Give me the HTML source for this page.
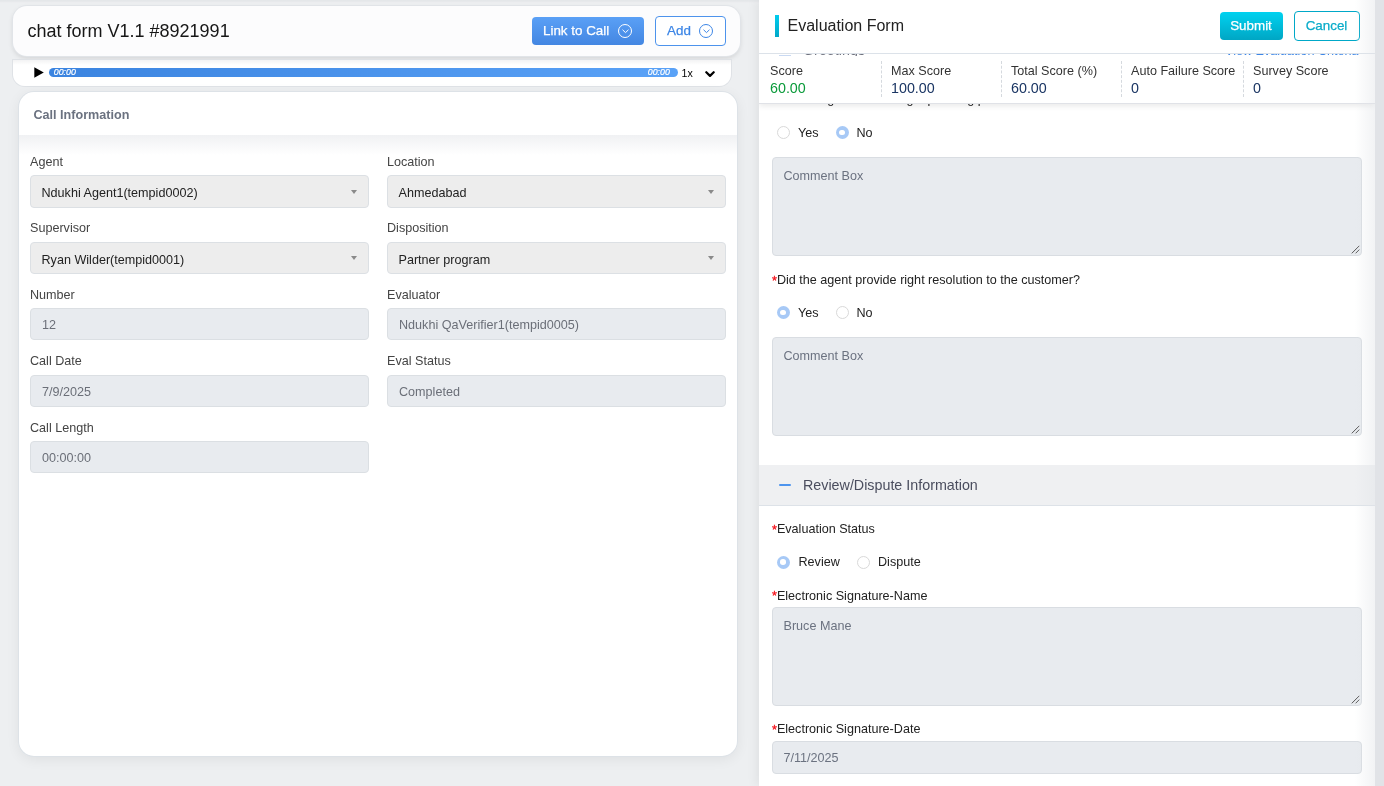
<!DOCTYPE html>
<html><head><meta charset="utf-8">
<style>
*{box-sizing:border-box;margin:0;padding:0}
html,body{width:1384px;height:786px;overflow:hidden}
body{position:relative;background:#edeff1;font-family:"Liberation Sans",sans-serif;color:#333}
.abs{position:absolute}
/* left */
#hdr{left:13px;top:5.5px;width:727px;height:50.5px;background:#fcfcfd;border-radius:14px;box-shadow:0 0 0 1px #e1e4e8,0 2px 5px rgba(0,0,0,.13)}
#hdr .t{left:14.5px;top:13px;font-size:18px;color:#161616;white-space:nowrap;line-height:24px}
.btn1,.btn2,.sbtn,.cbtn{-webkit-text-stroke:0.25px currentColor}
.btn1{left:519px;top:11.5px;width:112px;height:28px;border-radius:4px;background:linear-gradient(#5aa0f6,#4386e2);color:#fff;font-size:13.4px;line-height:27.2px;padding-left:11px;white-space:nowrap}
.btn2{left:642px;top:10.5px;width:71px;height:30px;border-radius:4px;border:1px solid #4d93ec;color:#3d86e6;font-size:13.4px;line-height:27.2px;padding-left:11px;white-space:nowrap;background:#fff}
.circ{position:absolute;width:14px;height:14px;border-radius:50%;border:1px solid currentColor}
#audio{left:13px;top:59.5px;width:718px;height:26px;background:linear-gradient(#f3f3f4,#fafafa 3px,#fff 5px);border-radius:0 0 12px 12px;box-shadow:0 0 0 1px #dfe2e6,0 -1px 0 0 #d3d7dc}
.prog{left:35.8px;top:8.5px;width:629px;height:9px;border-radius:5px;background:linear-gradient(90deg,#3b84e0,#5aa2f7)}
.prog span{position:absolute;top:-1.2px;font-size:8.8px;font-style:italic;color:#fff;line-height:10px;-webkit-text-stroke:0.2px #fff}
.pt1{left:5px}.pt2{right:8px}
.spd{left:668.5px;top:7.2px;font-size:10.6px;color:#000;line-height:13px}
#card{left:19px;top:91.5px;width:718px;height:664.5px;background:#fff;border-radius:15px;box-shadow:0 0 0 1px #dde2e7,0 3px 14px rgba(0,0,0,.07)}
#card .ch{left:0;top:0;width:718px;height:43.5px;border-bottom:0;}
#card .cht{left:14.5px;top:15px;font-size:12.6px;font-weight:bold;color:#6b7280;line-height:16px}
#card .shade{left:0;top:43.5px;width:718px;height:20px;background:linear-gradient(#f0f1f3,#fff)}
.lbl{position:absolute;font-size:12.6px;color:#444;line-height:15px;white-space:nowrap}
.sel{position:absolute;width:339px;height:32.5px;background:#ededed;border:1px solid #dce0e4;border-radius:4px;font-size:12.6px;color:#222;line-height:34px;padding-left:10.5px;white-space:nowrap}
.sel:after{content:"";position:absolute;right:11px;top:13.5px;border-left:3px solid transparent;border-right:3px solid transparent;border-top:4px solid #8a8a8a}
.inp{position:absolute;width:339px;height:32px;background:#e8ebef;border:1px solid #dbdfe3;border-radius:4px;font-size:12.6px;color:#6b6f78;line-height:32px;padding-left:11px;white-space:nowrap}
/* right */
#rp{left:759px;top:0;width:616px;height:786px;background:#fff;overflow:hidden}
#rpsh{left:759px;top:0;width:616px;height:786px;box-shadow:-3px 0 10px rgba(0,0,0,.06)}
.q{font-size:12.6px;color:#222;line-height:15px;white-space:nowrap}
.req{color:#f5161e;font-size:12.6px;position:relative;top:0.5px;margin-right:0px;-webkit-text-stroke:0.35px #f5161e}
.rad{width:13px;height:13px;border-radius:50%;border:1px solid #d9d9d9;background:#fff}
.rad.on{border:none;background:#a7c9f6}
.rad.on:after{content:"";position:absolute;left:3.75px;top:3.75px;width:5.5px;height:5.5px;border-radius:50%;background:#fff}
.rl{font-size:12.6px;color:#222;line-height:15px;margin-top:1px;white-space:nowrap}
.ta{width:589.5px;background:#e8ebef;border:1px solid #d9dde2;border-radius:4px;font-size:12.6px;color:#6b7280;line-height:15px;padding:10.5px 0 0 10.5px;white-space:nowrap}
.grip{position:absolute;right:1px;bottom:1px;width:9px;height:9px}
.sec{width:616px;height:41px;background:#eff0f2;border-bottom:1px solid #dde2e8}
.minus{position:absolute;left:19.5px;top:19px;width:12.5px;height:2px;border-radius:1px;background:#4d94ee}
.st{position:absolute;left:44px;top:12px;font-size:14.3px;color:#4a4d5e;line-height:17px;white-space:nowrap}
.rhead{left:0;top:0;width:616px;height:54px;background:#fff;border-bottom:1px solid #dde3ea}
.acc{left:16px;top:15px;width:4px;height:22px;background:linear-gradient(#00cdef,#00a8c8)}
.rtitle{left:28.5px;top:16px;font-size:16px;color:#222;line-height:19px;white-space:nowrap}
.sbtn{left:460.5px;top:12px;width:63px;height:28px;border-radius:4px;background:linear-gradient(#00d2f0,#00a6c4);color:#fff;font-size:13.4px;line-height:28px;text-align:center}
.cbtn{left:535px;top:11px;width:66px;height:30px;border-radius:4px;border:1px solid #00a8c8;color:#0aacca;font-size:13.4px;line-height:28px;text-align:center;padding-right:1px;background:#fff}
.scb{left:0;top:56px;width:616px;height:48px;background:#fff;border-bottom:1px solid #e0e2e7;box-shadow:0 2px 6px rgba(0,0,0,.09)}
.sc{top:6.5px}
.sl{font-size:12.6px;color:#333;line-height:16px;white-space:nowrap}
.sv{font-size:14.3px;color:#1a3563;margin-top:0.5px;line-height:18px;white-space:nowrap}
.dv{top:5px;width:0;height:36px;border-left:1px dashed #d5d9de}
.peek{left:0;top:54px;width:616px;height:1.6px;overflow:hidden;background:#fff}
.rshade{left:596px;top:0;width:20px;height:786px;background:linear-gradient(90deg,rgba(225,228,232,0),rgba(225,228,232,.45))}
#sb{left:1375px;top:0;width:9px;height:786px;background:#e1e3e7}
</style></head><body><div id="wrap" style="position:absolute;left:0;top:0;width:1384px;height:786px;will-change:transform">

<div class="abs" style="left:0;top:0;width:759px;height:3px;background:linear-gradient(#e2e4e7,rgba(237,239,241,0))"></div>
<div id="hdr" class="abs">
  <div class="abs t">chat form V1.1 #8921991</div>
  <div class="abs btn1">Link to Call<span class="circ" style="left:86px;top:7px"><svg style="position:absolute;left:2.5px;top:3.8px" width="7" height="5" viewBox="0 0 7 5"><path d="M0.8 1 L3.5 3.6 L6.2 1" fill="none" stroke="currentColor" stroke-width="1" stroke-linecap="round"/></svg></span></div>
  <div class="abs btn2">Add<span class="circ" style="left:43px;top:7px"><svg style="position:absolute;left:2.5px;top:3.8px" width="7" height="5" viewBox="0 0 7 5"><path d="M0.8 1 L3.5 3.6 L6.2 1" fill="none" stroke="currentColor" stroke-width="1" stroke-linecap="round"/></svg></span></div>
</div>

<div id="audio" class="abs">
  <svg class="abs" style="left:21px;top:7px" width="10" height="11" viewBox="0 0 10 11"><path d="M0.3 0.2 L9.8 5.5 L0.3 10.8 Z" fill="#000"/></svg>
  <div class="abs prog"><span class="pt1">00:00</span><span class="pt2">00:00</span></div>
  <div class="abs spd">1x</div>
  <svg class="abs" style="left:691.5px;top:11px" width="10" height="7" viewBox="0 0 10 7"><path d="M1.3 1.2 L5 4.9 L8.7 1.2" fill="none" stroke="#000" stroke-width="2.2" stroke-linecap="round" stroke-linejoin="round"/></svg>
</div>

<div id="card" class="abs">
  <div class="abs ch"><div class="abs cht">Call Information</div></div>
  <div class="abs shade"></div>
  <div class="lbl" style="left:11px;top:63px">Agent</div>
  <div class="sel" style="left:11px;top:83.5px">Ndukhi Agent1(tempid0002)</div>
  <div class="lbl" style="left:368px;top:63px">Location</div>
  <div class="sel" style="left:368px;top:83.5px">Ahmedabad</div>

  <div class="lbl" style="left:11px;top:129.5px">Supervisor</div>
  <div class="sel" style="left:11px;top:150px">Ryan Wilder(tempid0001)</div>
  <div class="lbl" style="left:368px;top:129.5px">Disposition</div>
  <div class="sel" style="left:368px;top:150px">Partner program</div>

  <div class="lbl" style="left:11px;top:196px">Number</div>
  <div class="inp" style="left:11px;top:216.5px">12</div>
  <div class="lbl" style="left:368px;top:196px">Evaluator</div>
  <div class="inp" style="left:368px;top:216.5px">Ndukhi QaVerifier1(tempid0005)</div>

  <div class="lbl" style="left:11px;top:262.5px">Call Date</div>
  <div class="inp" style="left:11px;top:283px">7/9/2025</div>
  <div class="lbl" style="left:368px;top:262.5px">Eval Status</div>
  <div class="inp" style="left:368px;top:283px">Completed</div>

  <div class="lbl" style="left:11px;top:329px">Call Length</div>
  <div class="inp" style="left:11px;top:349.5px">00:00:00</div>
</div>

<div id="rpsh" class="abs"></div>
<div id="rp" class="abs">
  <!-- scrolled content (absolute in panel coords: panel left = 759) -->
  <div class="abs q" style="left:13px;top:92px"><span class="req">*</span>Did the agent start using a pleasing phrase to welcome the client?</div>
  <div class="abs rad" style="left:17.5px;top:126px"></div><div class="abs rl" style="left:39px;top:125px">Yes</div>
  <div class="abs rad on" style="left:76.5px;top:126px"></div><div class="abs rl" style="left:97.5px;top:125px">No</div>
  <div class="abs ta" style="left:13px;top:157px;height:99px">Comment Box<svg class="grip" width="9" height="9" viewBox="0 0 9 9"><path d="M0.8 8.3 L8.3 0.8 M4.6 8.3 L8.3 4.6" stroke="#555" stroke-width="1" fill="none"/></svg></div>

  <div class="abs q" style="left:13px;top:273px"><span class="req">*</span>Did the agent provide right resolution to the customer?</div>
  <div class="abs rad on" style="left:17.5px;top:306px"></div><div class="abs rl" style="left:39px;top:305px">Yes</div>
  <div class="abs rad" style="left:76.5px;top:306px"></div><div class="abs rl" style="left:97.5px;top:305px">No</div>
  <div class="abs ta" style="left:13px;top:337px;height:99px">Comment Box<svg class="grip" width="9" height="9" viewBox="0 0 9 9"><path d="M0.8 8.3 L8.3 0.8 M4.6 8.3 L8.3 4.6" stroke="#555" stroke-width="1" fill="none"/></svg></div>

  <div class="abs sec" style="left:0;top:465px"><span class="minus"></span><span class="st">Review/Dispute Information</span></div>

  <div class="abs q" style="left:13px;top:522px"><span class="req">*</span>Evaluation Status</div>
  <div class="abs rad on" style="left:17.5px;top:555.5px"></div><div class="abs rl" style="left:39.5px;top:553.5px">Review</div>
  <div class="abs rad" style="left:97.5px;top:555.5px"></div><div class="abs rl" style="left:119px;top:553.5px">Dispute</div>

  <div class="abs q" style="left:13px;top:588.5px"><span class="req">*</span>Electronic Signature-Name</div>
  <div class="abs ta" style="left:13px;top:607px;height:99px;padding-top:10.5px">Bruce Mane<svg class="grip" width="9" height="9" viewBox="0 0 9 9"><path d="M0.8 8.3 L8.3 0.8 M4.6 8.3 L8.3 4.6" stroke="#555" stroke-width="1" fill="none"/></svg></div>

  <div class="abs q" style="left:13px;top:722px"><span class="req">*</span>Electronic Signature-Date</div>
  <div class="abs ta" style="left:13px;top:741px;height:33px;padding-top:0;line-height:32.5px">7/11/2025</div>

  <!-- header -->
  <div class="abs rhead">
    <div class="abs acc"></div>
    <div class="abs rtitle">Evaluation Form</div>
    <div class="abs sbtn">Submit</div>
    <div class="abs cbtn">Cancel</div>
  </div>
  
  <!-- score bar -->
  <div class="abs scb">
    <div class="abs sc" style="left:11px"><div class="sl">Score</div><div class="sv" style="color:#0a9a3a">60.00</div></div>
    <div class="abs dv" style="left:122px"></div>
    <div class="abs sc" style="left:132px"><div class="sl">Max Score</div><div class="sv">100.00</div></div>
    <div class="abs dv" style="left:242px"></div>
    <div class="abs sc" style="left:252px"><div class="sl">Total Score (%)</div><div class="sv">60.00</div></div>
    <div class="abs dv" style="left:362px"></div>
    <div class="abs sc" style="left:372px"><div class="sl">Auto Failure Score</div><div class="sv">0</div></div>
    <div class="abs dv" style="left:484px"></div>
    <div class="abs sc" style="left:494px"><div class="sl">Survey Score</div><div class="sv">0</div></div>
  </div>
  <div class="abs peek">
    <div class="abs" style="left:20px;top:-14px;width:12px;height:16px;border-bottom:1.5px solid #c9d9f2"></div>
    <div class="abs" style="left:44px;top:-11.5px;font-size:14.3px;color:#70737f;line-height:15px;white-space:nowrap">Greetings</div>
    <div class="abs" style="left:466px;top:-10px;font-size:12.6px;color:#3d86e6;line-height:14px;white-space:nowrap">View Evaluation Criteria</div>
  </div>
  <div class="abs rshade"></div>
</div>
<div id="sb" class="abs"></div>
</div></body></html>
